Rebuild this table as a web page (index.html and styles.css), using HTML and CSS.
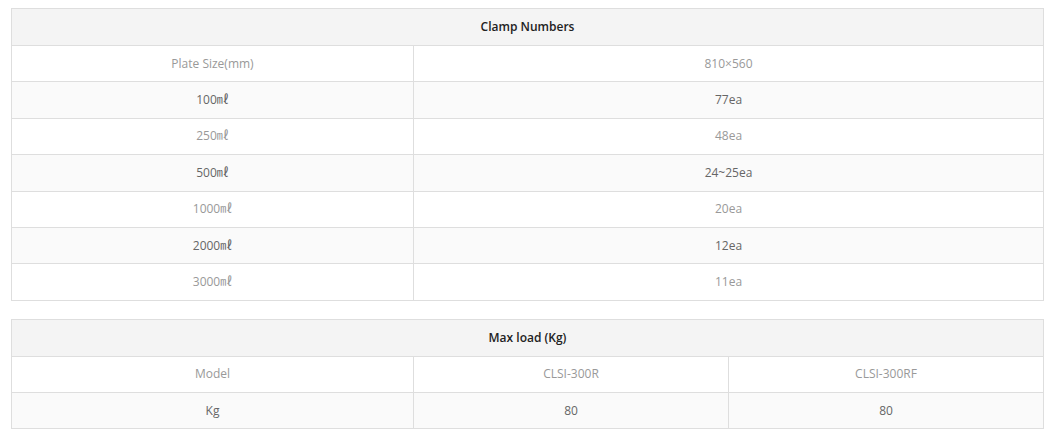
FILE: index.html
```html
<!DOCTYPE html>
<html>
<head>
<meta charset="utf-8">
<link rel="stylesheet" href="styles.css">
</head>
<body>
<div class="page">
  <table class="spec">
    <colgroup><col class="c-label"><col class="c-rest"></colgroup>
    <thead>
      <tr><th colspan="2">Clamp Numbers</th></tr>
    </thead>
    <tbody>
      <tr><td>Plate Size(mm)</td><td>810×560</td></tr>
      <tr><td>100㎖</td><td>77ea</td></tr>
      <tr><td>250㎖</td><td>48ea</td></tr>
      <tr><td>500㎖</td><td>24~25ea</td></tr>
      <tr><td>1000㎖</td><td>20ea</td></tr>
      <tr><td>2000㎖</td><td>12ea</td></tr>
      <tr><td>3000㎖</td><td>11ea</td></tr>
    </tbody>
  </table>
  <table class="spec">
    <colgroup><col class="c-label"><col class="c-half"><col class="c-half"></colgroup>
    <thead>
      <tr><th colspan="3">Max load (Kg)</th></tr>
    </thead>
    <tbody>
      <tr><td>Model</td><td>CLSI-300R</td><td>CLSI-300RF</td></tr>
      <tr><td>Kg</td><td>80</td><td>80</td></tr>
    </tbody>
  </table>
</div>
</body>
</html>
```
FILE: styles.css
```css
html, body {
  margin: 0;
  padding: 0;
  background: #fff;
}
.page {
  padding: 8px 0 0 11px;
  width: 1033px;
  display: flex;
  flex-direction: column;
  gap: 18px;
  font-family: "Open Sans", "Noto Sans CJK KR", sans-serif;
  font-size: 12px;
}
.spec {
  width: 1033px;
  border-collapse: collapse;
  table-layout: fixed;
  border: 1px solid #dedede;
}
.c-label { width: 402px; }
.c-half { width: 315px; }
.spec th {
  background: #f4f4f4;
  color: #222;
  font-weight: 600;
  line-height: 16px;
  padding: 10px 0;
  border: 1px solid #dedede;
  text-align: center;
}
.spec td {
  border: 1px solid #dedede;
  text-align: center;
  line-height: 16px;
  padding: 9.7px 0;
  color: #999;
  background: #fff;
}
.spec tbody tr:nth-child(even) td {
  background: #fafafa;
  color: #666;
}
```
